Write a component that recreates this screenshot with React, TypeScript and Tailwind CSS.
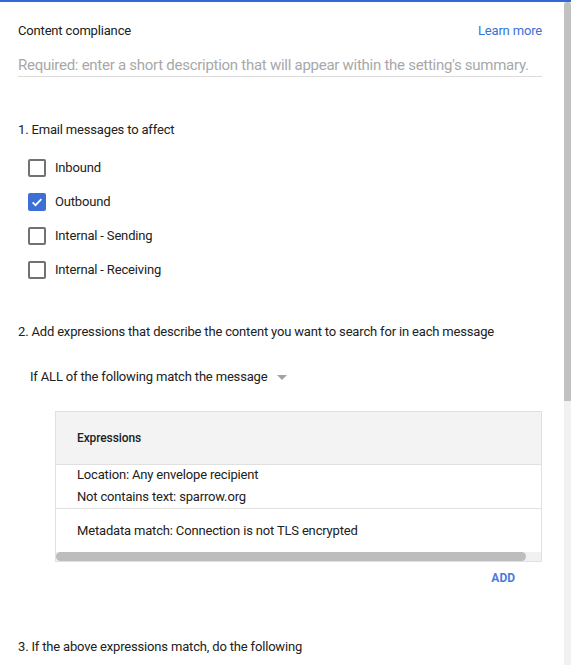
import React from "react";

const font = { fontFamily: "Roboto, 'Liberation Sans', Arial, sans-serif" };

const t13 = "text-[13px] leading-[20px] tracking-[-0.17px] text-[#212121]";

function Checkbox({ checked, label }: { checked?: boolean; label: string }) {
  return (
    <div className="flex items-center h-[34px] pl-[10px]">
      {checked ? (
        <div className="w-[18px] h-[18px] rounded-[2px] bg-[#3b6fd6] flex items-center justify-center">
          <svg width="14" height="14" viewBox="0 0 24 24">
            <path d="M4.5 12.5l5 5 10-10.5" fill="none" stroke="white" strokeWidth="3" />
          </svg>
        </div>
      ) : (
        <div className="w-[18px] h-[18px] rounded-[2px] border-2 border-[#717171]" />
      )}
      <span className={"ml-[9px] " + t13}>{label}</span>
    </div>
  );
}

export default function App() {
  return (
    <div className="w-[571px] h-[665px] overflow-hidden bg-white flex flex-col" style={font}>
      <div className="h-[2px] bg-[#3367d6] shrink-0" />
      <div className="flex flex-1 min-h-0">
        <div className="flex-1 min-w-0 overflow-hidden pl-[18px] pr-[22px] pt-[19px]">
          <div className="flex justify-between items-center h-[20px]">
            <span className={t13}>Content compliance</span>
            <span className="text-[13px] leading-[20px] tracking-[-0.17px] text-[#3b6fd6]">Learn more</span>
          </div>
          <div className="mt-[13px] h-[23px] border-b border-[#dcdcdc] text-[15px] leading-[22px] tracking-[-0.27px] text-[#a8a8a8] whitespace-nowrap">
            Required: enter a short description that will appear within the setting's summary.
          </div>
          <div className={"mt-[43px] " + t13}>1. Email messages to affect</div>
          <div className="mt-[11px] flex flex-col">
            <Checkbox label="Inbound" />
            <Checkbox checked label="Outbound" />
            <Checkbox label="Internal - Sending" />
            <Checkbox label="Internal - Receiving" />
          </div>
          <div className={"mt-[35px] whitespace-nowrap " + t13}>
            2. Add expressions that describe the content you want to search for in each message
          </div>
          <div className="mt-[25px] ml-[12px] flex items-center h-[20px]">
            <span className={t13}>If ALL of the following match the message</span>
            <svg className="ml-[10px]" width="10" height="5" viewBox="0 0 10 5">
              <path d="M0 0h10L5 5z" fill="#a3a3a3" />
            </svg>
          </div>
          <div className="mt-[24px] ml-[37px] border border-[#e0e0e0] flex flex-col">
            <div className="h-[53px] bg-[#f3f3f3] border-b border-[#e0e0e0] flex items-center pl-[21px]">
              <span className="text-[12px] font-medium tracking-[-0.1px] text-[#212121]">Expressions</span>
            </div>
            <div className="h-[44px] border-b border-[#e0e0e0] pl-[21px] flex flex-col">
              <span className={t13}>Location: Any envelope recipient</span>
              <span className={"mt-[2px] " + t13}>Not contains text: sparrow.org</span>
            </div>
            <div className="h-[43px] pl-[21px] pt-[9px]">
              <span className={t13}>Metadata match: Connection is not TLS encrypted</span>
            </div>
            <div className="h-[9px] bg-[#f1f1f1] flex items-center">
              <div className="h-[9px] w-[470px] rounded-full bg-[#bdbdbd]" />
            </div>
          </div>
          <div className="mt-[6px] flex justify-end pr-[27px]">
            <span className="text-[12px] leading-[20px] font-bold text-[#4a7bdc]">ADD</span>
          </div>
          <div className={"mt-[49px] " + t13}>3. If the above expressions match, do the following</div>
        </div>
        <div className="w-[7px] bg-[#f1f1f1] shrink-0">
          <div className="h-[399px] bg-[#c1c1c1] rounded-t-[3px]" />
        </div>
      </div>
    </div>
  );
}
